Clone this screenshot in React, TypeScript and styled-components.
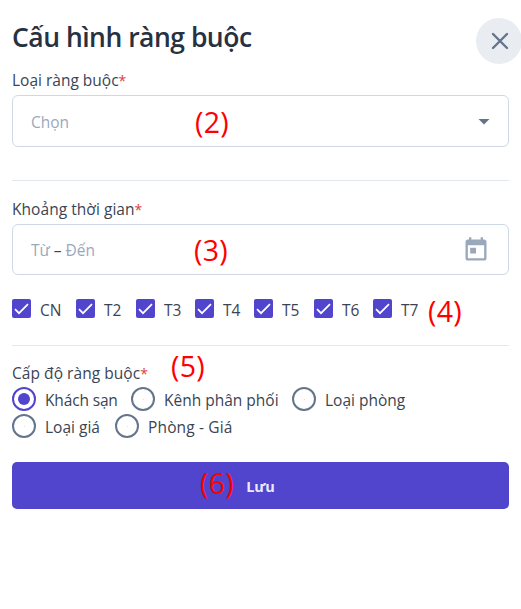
import React from "react";
import styled, { createGlobalStyle } from "styled-components";

const GlobalStyle = createGlobalStyle`
  * { box-sizing: border-box; }
  body {
    margin: 0;
    background: #fff;
    overflow: hidden;
    font-family: "Open Sans", "Noto Sans", sans-serif;
    font-size: 15.5px;
    color: #3a4453;
  }
`;

const Panel = styled.main`
  position: relative;
  width: 521px;
  height: 609px;
  padding: 18px 12px 0;
`;

const Header = styled.header`
  display: flex;
  justify-content: space-between;
  height: 50px;
  margin-right: -13px;
`;

const Title = styled.h1`
  margin: 0;
  font-size: 26.5px;
  font-weight: 600;
  line-height: 39px;
  letter-spacing: -0.5px;
  color: #273142;
  white-space: nowrap;
`;

const CloseButton = styled.button`
  display: grid;
  place-items: center;
  flex: none;
  width: 46px;
  height: 46px;
  padding: 0 0 0 2px;
  border: 0;
  border-radius: 50%;
  background: #e9edf2;
`;

const Label = styled.div<{ $line?: number; $spacing?: number }>`
  height: 27px;
  line-height: ${(p) => p.$line ?? 24}px;
  letter-spacing: ${(p) => p.$spacing ?? 0}px;
  white-space: nowrap;
`;

const Required = styled.span`
  color: #e03c3c;
  font-size: 14px;
`;

const Field = styled.div<{ $height: number; $shift: number }>`
  display: flex;
  align-items: center;
  justify-content: space-between;
  width: 497px;
  height: ${(p) => p.$height}px;
  padding: ${(p) => p.$shift}px 18px 0;
  border: 1px solid #cfd8e5;
  border-radius: 6px;
`;

const Placeholder = styled.span`
  color: #9aa8bc;
`;

const Dash = styled.span`
  color: #3a4453;
`;

const Divider = styled.hr<{ $top: number; $bottom: number }>`
  height: 1px;
  margin: ${(p) => p.$top}px 0 ${(p) => p.$bottom}px;
  border: 0;
  background: #e2e7f0;
`;

const Days = styled.div`
  display: grid;
  grid-template-columns: 64px 60px 59px 59px 60px 59px 60px;
  margin-top: 24px;
`;

const Day = styled.label`
  display: flex;
  gap: 9px;
  height: 19px;
  line-height: 23px;
`;

const CheckBox = styled.span`
  display: grid;
  place-items: center;
  width: 19px;
  height: 19px;
  border-radius: 2px;
  background: #5145cd;
`;

const RadioRow = styled.div<{ $columns: string }>`
  display: grid;
  grid-template-columns: ${(p) => p.$columns};
  height: 27px;
`;

const Option = styled.label<{ $spacing?: number }>`
  display: flex;
  gap: 9px;
  height: 24px;
  line-height: 27px;
  letter-spacing: ${(p) => p.$spacing ?? 0}px;
  white-space: nowrap;
`;

const Radio = styled.span<{ $checked?: boolean }>`
  display: grid;
  place-items: center;
  flex: none;
  width: 24px;
  height: 24px;
  border: 2px solid ${(p) => (p.$checked ? "#5145cd" : "#64748b")};
  border-radius: 50%;
  &::after {
    content: "";
    width: ${(p) => (p.$checked ? 12 : 1)}px;
    height: ${(p) => (p.$checked ? 12 : 1)}px;
    border-radius: 50%;
    background: ${(p) => (p.$checked ? "#5145cd" : "#d5dae2")};
  }
`;

const SaveButton = styled.button`
  display: block;
  width: 497px;
  height: 47px;
  margin-top: 21px;
  padding: 1px 0 0;
  border: 0;
  border-radius: 5px;
  background: #5145cd;
  color: #ebe9fc;
  font: 700 14.5px "Open Sans", "Noto Sans", sans-serif;
`;

const Marker = styled.span<{ $x: number; $y: number }>`
  position: absolute;
  left: ${(p) => p.$x}px;
  top: ${(p) => p.$y}px;
  font-size: 28.5px;
  line-height: 40px;
  letter-spacing: 0.3px;
  color: #ff0000;
`;

const days = ["CN", "T2", "T3", "T4", "T5", "T6", "T7"];

const markers = [
  { text: "(2)", x: 195, y: 102 },
  { text: "(3)", x: 194, y: 230 },
  { text: "(4)", x: 428, y: 291 },
  { text: "(5)", x: 171, y: 346 },
  { text: "(6)", x: 200, y: 463 },
];

export default function App() {
  return (
    <>
      <GlobalStyle />
      <Panel>
        <Header>
          <Title>Cấu hình ràng buộc</Title>
          <CloseButton aria-label="Đóng">
            <svg width="18" height="18" viewBox="0 0 18 18" fill="none" stroke="#64748b" strokeWidth="2.4" strokeLinecap="round">
              <path d="M2 2 16 16M16 2 2 16" />
            </svg>
          </CloseButton>
        </Header>

        <Label>Loại ràng buộc<Required>*</Required></Label>
        <Field $height={52} $shift={2}>
          <Placeholder>Chọn</Placeholder>
          <svg width="12" height="6" viewBox="0 0 12 6" fill="#64748b">
            <path d="M.5 0h11L6 5.5z" />
          </svg>
        </Field>

        <Divider $top={33} $bottom={16} />

        <Label $spacing={0.05}>Khoảng thời gian<Required>*</Required></Label>
        <Field $height={51} $shift={0}>
          <Placeholder>Từ <Dash>–</Dash> Đến</Placeholder>
          <svg width="28" height="28" viewBox="0 0 24 24" fill="#9aa8bc">
            <path d="M19 3h-1V1h-2v2H8V1H6v2H5c-1.11 0-1.99.9-1.99 2L3 19c0 1.1.89 2 2 2h14c1.1 0 2-.9 2-2V5c0-1.1-.9-2-2-2zm0 16H5V8h14v11zM7 10h5v5H7z" />
          </svg>
        </Field>

        <Days>
          {days.map((day) => (
            <Day key={day}>
              <CheckBox>
                <svg width="15" height="12" viewBox="0 0 15 12" fill="none" stroke="#fff" strokeWidth="1.7">
                  <path d="M1 6.2 5 10.2 14 1.2" />
                </svg>
              </CheckBox>
              {day}
            </Day>
          ))}
        </Days>

        <Divider $top={27} $bottom={14} />

        <Label $line={26} $spacing={0.05}>Cấp độ ràng buộc<Required>*</Required></Label>
        <RadioRow $columns="119px 161px 1fr">
          <Option $spacing={-0.15}><Radio $checked />Khách sạn</Option>
          <Option><Radio />Kênh phân phối</Option>
          <Option><Radio />Loại phòng</Option>
        </RadioRow>
        <RadioRow $columns="103px 1fr">
          <Option><Radio />Loại giá</Option>
          <Option $spacing={0.15}><Radio />Phòng - Giá</Option>
        </RadioRow>

        <SaveButton>Lưu</SaveButton>

        {markers.map((m) => (
          <Marker key={m.text} $x={m.x} $y={m.y}>{m.text}</Marker>
        ))}
      </Panel>
    </>
  );
}
